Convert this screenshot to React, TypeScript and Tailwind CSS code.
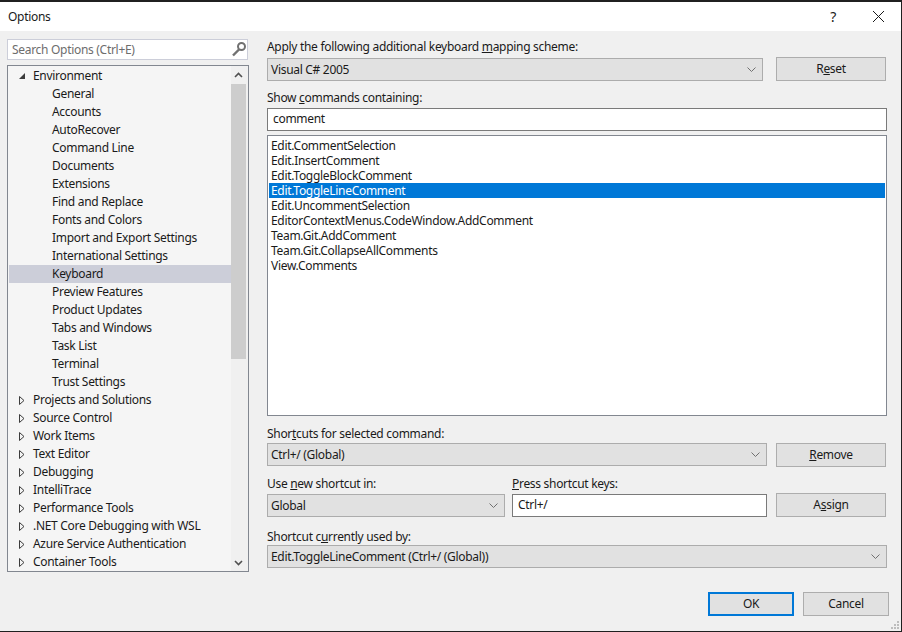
import React from "react";

const font = "font-['Noto_Sans','Open_Sans',sans-serif]";

const envChildren = [
  "General",
  "Accounts",
  "AutoRecover",
  "Command Line",
  "Documents",
  "Extensions",
  "Find and Replace",
  "Fonts and Colors",
  "Import and Export Settings",
  "International Settings",
  "Keyboard",
  "Preview Features",
  "Product Updates",
  "Tabs and Windows",
  "Task List",
  "Terminal",
  "Trust Settings",
];

const collapsed = [
  "Projects and Solutions",
  "Source Control",
  "Work Items",
  "Text Editor",
  "Debugging",
  "IntelliTrace",
  "Performance Tools",
  ".NET Core Debugging with WSL",
  "Azure Service Authentication",
  "Container Tools",
];

const commands = [
  "Edit.CommentSelection",
  "Edit.InsertComment",
  "Edit.ToggleBlockComment",
  "Edit.ToggleLineComment",
  "Edit.UncommentSelection",
  "EditorContextMenus.CodeWindow.AddComment",
  "Team.Git.AddComment",
  "Team.Git.CollapseAllComments",
  "View.Comments",
];

const Chevron = () => (
  <svg width="9" height="5" viewBox="0 0 9 5" className="shrink-0">
    <path d="M0.5 0.5 L4.5 4.5 L8.5 0.5" fill="none" stroke="#707070" strokeWidth="1" />
  </svg>
);

const Combo = ({ text, className }: { text: string; className: string }) => (
  <div className={`flex h-[23px] items-center justify-between border border-[#acacac] bg-[#e1e1e1] pl-[3px] pr-[6px] ${className}`}>
    <span>{text}</span>
    <Chevron />
  </div>
);

const Button = ({ children, className = "border border-[#adadad]" }: { children: React.ReactNode; className?: string }) => (
  <div className={`flex items-center justify-center bg-[#e1e1e1] ${className}`}>
    {children}
  </div>
);

const Field = ({ text, className }: { text: string; className: string }) => (
  <div className={`flex h-[23px] items-center border border-[#7a7a7a] bg-white pb-px pl-[5px] ${className}`}>
    {text}
  </div>
);

export default function App() {
  return (
    <div className={`relative flex h-[632px] w-[902px] flex-col overflow-hidden border-t-2 border-r border-b border-[#202020] bg-[#f0f0f0] text-[12px] leading-[16px] tracking-[-0.3px] text-[#1a1a1a] ${font}`}>
      {/* title bar */}
      <div className="flex h-[29px] shrink-0 items-center justify-between bg-white pl-2">
        <span>Options</span>
        <div className="flex items-center">
          <span className="mr-[37px] text-[14px]">?</span>
          <svg width="11" height="11" viewBox="0 0 11 11" className="mr-[17px]">
            <path d="M0 0 L11 11 M11 0 L0 11" stroke="#1a1a1a" strokeWidth="1" />
          </svg>
        </div>
      </div>

      <div className="flex flex-1">
        {/* left side */}
        <div className="ml-[7px] mt-2 w-[242px] shrink-0">
          <div className="flex h-[21px] w-[241px] items-center justify-between border border-[#ccced9] bg-white pl-1 pr-px text-[#6d6d6d]">
            <span>Search Options (Ctrl+E)</span>
            <svg width="14" height="15" viewBox="0 0 14 15">
              <circle cx="9.5" cy="4.5" r="3.5" fill="none" stroke="#717171" strokeWidth="2" />
              <path d="M7 7.5 L1 13.5" stroke="#717171" strokeWidth="2.4" />
            </svg>
          </div>
          <div className="mt-[5px] flex h-[507px] w-[242px] border border-[#828790] bg-[#f5f5f5] pl-px">
            <div className="h-full w-[222px] overflow-hidden pt-px">
              <div className="flex h-[18px] items-center">
                <svg width="6" height="6" viewBox="0 0 6 6" className="ml-[10px] mr-[8px]">
                  <path d="M6 0 V6 H0 Z" fill="#3c3c3c" />
                </svg>
                <span>Environment</span>
              </div>
              {envChildren.map((name) => (
                <div key={name} className={`flex h-[18px] items-center pl-[43px] ${name === "Keyboard" ? "bg-[#ccced9]" : ""}`}>
                  {name}
                </div>
              ))}
              {collapsed.map((name) => (
                <div key={name} className="flex h-[18px] items-center">
                  <svg width="6" height="9" viewBox="0 0 6 9" className="ml-[10px] mr-[8px]">
                    <path d="M0.5 0.5 L5 4.5 L0.5 8.5 Z" fill="#f5f5f5" stroke="#3c3c3c" strokeWidth="1" />
                  </svg>
                  <span>{name}</span>
                </div>
              ))}
            </div>
            <div className="flex h-full w-[17px] flex-col items-start bg-[#f0f0f0]">
              <div className="flex h-[18px] w-[15px] items-center justify-center">
                <svg width="9" height="6" viewBox="0 0 9 6">
                  <path d="M1 5 L4.5 1.5 L8 5" fill="none" stroke="#505050" strokeWidth="1.6" />
                </svg>
              </div>
              <div className="h-[275px] w-[15px] bg-[#cdcdcd]" />
              <div className="flex-1" />
              <div className="flex h-[17px] w-[15px] items-center justify-center">
                <svg width="9" height="6" viewBox="0 0 9 6">
                  <path d="M1 1 L4.5 4.5 L8 1" fill="none" stroke="#505050" strokeWidth="1.6" />
                </svg>
              </div>
            </div>
          </div>
        </div>

        {/* right side */}
        <div className="ml-[18px] w-[622px] shrink-0 pt-[8px]">
          <div className="h-[18px]">
            Apply the following additional keyboard <u>m</u>apping scheme:
          </div>
          <div className="mt-[1px] flex gap-[13px]">
            <Combo text="Visual C# 2005" className="w-[496px]" />
            <Button className="h-[24px] w-[110px] -translate-y-px border border-[#adadad]">
              <span>R<u>e</u>set</span>
            </Button>
          </div>
          <div className="mt-[8px] h-[17px]">
            Show <u>c</u>ommands containing:
          </div>
          <Field text="comment" className="mt-px w-[620px]" />
          <div className="mt-1 h-[281px] w-[620px] border border-[#828790] bg-white p-px pt-[2px] leading-[15px]">
            {commands.map((name) => (
              <div key={name} className={`h-[15px] pl-[2px] ${name === "Edit.ToggleLineComment" ? "bg-[#0078d7] text-white" : ""}`}>
                {name}
              </div>
            ))}
          </div>
          <div className="mt-[10px] h-[16px]">
            Shor<u>t</u>cuts for selected command:
          </div>
          <div className="mt-px flex gap-[9px]">
            <Combo text="Ctrl+/ (Global)" className="w-[500px]" />
            <Button className="h-[24px] w-[110px] border border-[#adadad]">
              <span><u>R</u>emove</span>
            </Button>
          </div>
          <div className="mt-[9px] flex">
            <div className="w-[245px]">
              <div className="h-[18px]">
                Use <u>n</u>ew shortcut in:
              </div>
              <Combo text="Global" className="w-[238px]" />
            </div>
            <div className="w-[264px]">
              <div className="h-[18px]">
                <u>P</u>ress shortcut keys:
              </div>
              <Field text="Ctrl+/" className="w-[255px]" />
            </div>
            <Button className="mt-[17px] h-[24px] w-[110px] border border-[#adadad]">
              <span>A<u>s</u>sign</span>
            </Button>
          </div>
          <div className="mt-[12px] h-[16px]">
            Shortcut c<u>u</u>rrently used by:
          </div>
          <Combo text="Edit.ToggleLineComment (Ctrl+/ (Global))" className="w-[620px]" />
          <div className="mt-[24px] flex w-[622px] justify-end gap-[9px]">
            <Button className="h-[24px] w-[86px] border-2 border-[#0078d7]">OK</Button>
            <Button className="h-[24px] w-[86px] border border-[#adadad]">Cancel</Button>
          </div>
        </div>
      </div>

      {/* resize grip */}
      <svg width="10" height="10" viewBox="0 0 10 10" className="absolute bottom-[1px] right-[1px]">
        <path d="M7 1h2v2h-2z M4 4h2v2h-2z M7 4h2v2h-2z M1 7h2v2h-2z M4 7h2v2h-2z M7 7h2v2h-2z" fill="#bdbdbd" />
      </svg>
    </div>
  );
}
